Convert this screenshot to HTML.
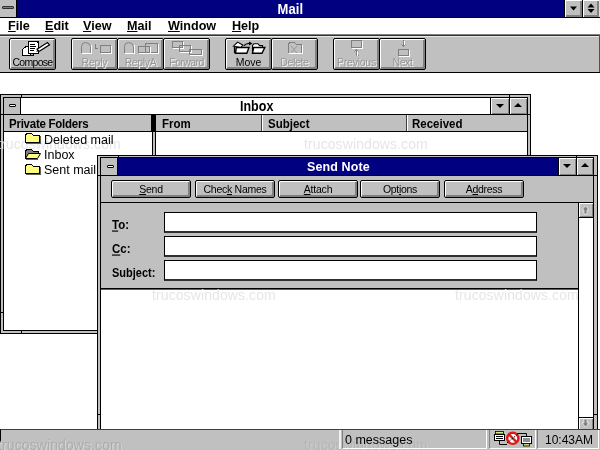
<!DOCTYPE html>
<html><head><meta charset="utf-8">
<style>
*{margin:0;padding:0;box-sizing:border-box}
html,body{width:600px;height:450px;overflow:hidden;background:#fff;font-family:"Liberation Sans",sans-serif}
.a{position:absolute}
.nav{background:#000080}
.g{background:#c0c0c0}
.k{background:#000}
.d{background:#808080}
.w{background:#fff}
.btn{position:absolute;background:#c0c0c0;border:1px solid #000;border-radius:2px;box-shadow:inset 1px 1px 0 #fff,inset -2px -2px 0 #808080}
.tb{font-size:10.5px;color:#000;text-align:center;white-space:nowrap}
.dis{color:#969696;text-shadow:1px 1px 0 #f4f4f4}
.bold{font-weight:bold}
.t{position:absolute;white-space:nowrap;line-height:1}
u{text-decoration:underline;text-underline-offset:1px;text-decoration-thickness:1px}
.wm{position:absolute;color:#e6e6e6;font-size:14px;white-space:nowrap;line-height:1;letter-spacing:0.1px}
.cb{position:absolute;background:#c0c0c0;box-shadow:inset 1px 1px #fff,inset -1px -1px #808080}
</style></head><body><div id="root" style="position:absolute;left:0;top:0;width:600px;height:450px;overflow:hidden;will-change:transform;background:#fff">

<div class="a nav" style="left:0;top:0;width:600px;height:17px"></div>
<div class="a g" style="left:0;top:0;width:17px;height:17px;border-right:1px solid #000"></div>
<div class="a" style="left:2px;top:6px;width:12px;height:3px;background:#808080;border:1px solid #303030;border-radius:1px"></div>
<div class="t bold" style="left:277.5px;top:2px;font-size:13px;color:#fff;letter-spacing:0.1px;transform:scaleY(1.08);transform-origin:0 0">Mail</div>
<div class="a k" style="left:564px;top:0;width:1px;height:17px"></div>
<div class="cb" style="left:565px;top:0;width:17px;height:17px;box-shadow:inset 1px 1px #fff,inset -2px -2px #808080"></div>
<div class="a k" style="left:582px;top:0;width:1px;height:17px"></div>
<div class="cb" style="left:583px;top:0;width:16px;height:17px;box-shadow:inset 1px 1px #fff,inset -2px -2px #808080"></div>
<div class="a" style="left:599px;top:0;width:1px;height:17px;background:#e0e0e0"></div>
<svg class="a" style="left:565px;top:0" width="35" height="17"><polygon points="5,6.5 12,6.5 8.5,10.5" fill="#000"/><polygon points="22.5,7.5 29.5,7.5 26,3.5" fill="#000"/><polygon points="22.5,9 29.5,9 26,13" fill="#000"/></svg>
<div class="a k" style="left:0;top:17px;width:600px;height:1px"></div>

<div class="t bold" style="left:8px;top:19.6px;font-size:12.6px"><u>F</u>ile</div>
<div class="t bold" style="left:45px;top:19.6px;font-size:12.6px"><u>E</u>dit</div>
<div class="t bold" style="left:83px;top:19.6px;font-size:12.6px"><u>V</u>iew</div>
<div class="t bold" style="left:127px;top:19.6px;font-size:12.6px"><u>M</u>ail</div>
<div class="t bold" style="left:168px;top:19.6px;font-size:12.6px"><u>W</u>indow</div>
<div class="t bold" style="left:232px;top:19.6px;font-size:12.6px"><u>H</u>elp</div>
<div class="a" style="left:0;top:34px;width:600px;height:1px;background:#808080"></div>
<div class="a" style="left:0;top:35px;width:600px;height:1px;background:#303030"></div>
<div class="a g" style="left:0;top:36px;width:600px;height:36px;border-top:1px solid #e8e8e8"></div>
<div class="a k" style="left:0;top:72px;width:600px;height:1px"></div>
<div class="a" style="left:599px;top:35px;width:1px;height:37px;background:#505050"></div>
<div class="btn" style="left:9px;top:38px;width:47px;height:32px"></div>
<div class="btn" style="left:71px;top:38px;width:47px;height:32px"></div>
<div class="btn" style="left:117px;top:38px;width:47px;height:32px"></div>
<div class="btn" style="left:163px;top:38px;width:47px;height:32px"></div>
<div class="btn" style="left:225px;top:38px;width:47px;height:32px"></div>
<div class="btn" style="left:271px;top:38px;width:47px;height:32px"></div>
<div class="btn" style="left:333px;top:38px;width:47px;height:32px"></div>
<div class="btn" style="left:379px;top:38px;width:47px;height:32px"></div>
<div class="t tb" style="left:9px;top:56.4px;width:47px;letter-spacing:-0.7px;transform:scaleY(1.1);transform-origin:0 0">Compose</div>
<div class="t tb dis" style="left:71px;top:56.4px;width:47px;letter-spacing:-0.2px;transform:scaleY(1.1);transform-origin:0 0">Reply</div>
<div class="t tb dis" style="left:117px;top:56.4px;width:47px;letter-spacing:-0.35px;transform:scaleY(1.1);transform-origin:0 0">ReplyA</div>
<div class="t tb dis" style="left:163px;top:56.4px;width:47px;letter-spacing:-0.6px;transform:scaleY(1.1);transform-origin:0 0">Forward</div>
<div class="t tb" style="left:225px;top:56.4px;width:47px;letter-spacing:-0.1px;transform:scaleY(1.1);transform-origin:0 0">Move</div>
<div class="t tb dis" style="left:271px;top:56.4px;width:47px;letter-spacing:-0.35px;transform:scaleY(1.1);transform-origin:0 0">Delete</div>
<div class="t tb dis" style="left:333px;top:56.4px;width:47px;letter-spacing:-0.25px;transform:scaleY(1.1);transform-origin:0 0">Previous</div>
<div class="t tb dis" style="left:379px;top:56.4px;width:47px;letter-spacing:-0.45px;transform:scaleY(1.1);transform-origin:0 0">Next</div>

<svg class="a" style="left:20px;top:40px" width="32" height="17" shape-rendering="crispEdges">
 <path d="M2.5,15.5 V9.5 L4.5,7.5 L6.5,6.5 H10.5 V15.5 Z" fill="#fff" stroke="#000"/>
 <path d="M2.5,15.5 H13.5 V13.5" fill="none" stroke="#000"/>
 <rect x="8.5" y="1.5" width="10" height="12" fill="#fff" stroke="#000"/>
 <path d="M10,4.5 H15 M10,6.5 H16 M10,8.5 H15 M10,10.5 H14" stroke="#000"/>
 <path d="M17,9.2 L27.5,2.5 L29.5,4.8 L19,11.5 Z" fill="#fff" stroke="#000" stroke-width="1.2" shape-rendering="auto"/>
 <path d="M17.5,9.8 L16.2,12 L18.8,11 Z" fill="#000" shape-rendering="auto"/>
 <path d="M16.5,1.5 L18.5,3.5" stroke="#000" shape-rendering="auto"/>
</svg>
<svg class="a" style="left:80px;top:41px" width="34" height="14" shape-rendering="crispEdges">
 <path d="M1.5,12 V5.5 Q1.5,1.5 5.5,1.5 Q9.5,1.5 10.5,5.5 V12" fill="none" stroke="#808080" shape-rendering="auto"/>
 <path d="M11.5,4 V12.5 H1.5" fill="none" stroke="#fff"/>
 <path d="M15.5,3 V7.5 H18" fill="none" stroke="#808080"/>
 <rect x="20.5" y="4.5" width="10" height="7" fill="none" stroke="#808080"/>
 <path d="M31.5,5 V12.5 H21" fill="none" stroke="#fff"/>
</svg>
<svg class="a" style="left:123px;top:41px" width="38" height="14" shape-rendering="crispEdges">
 <path d="M1.5,12 V5.5 Q1.5,1.5 5.5,1.5 Q9.5,1.5 10.5,5.5 V12" fill="none" stroke="#808080" shape-rendering="auto"/>
 <path d="M11.5,4 V12.5 H1.5" fill="none" stroke="#fff"/>
 <rect x="15.5" y="5.5" width="11" height="6" fill="none" stroke="#808080"/>
 <rect x="22.5" y="2.5" width="12" height="9" fill="none" stroke="#808080"/>
 <path d="M35.5,3 V12.5 H23" fill="none" stroke="#fff"/>
 <path d="M27.5,6 V12.5 H16" fill="none" stroke="#fff"/>
</svg>
<svg class="a" style="left:170px;top:40px" width="36" height="16" shape-rendering="crispEdges">
 <rect x="2.5" y="1.5" width="10" height="6" fill="none" stroke="#808080"/>
 <path d="M13.5,2 V8.5 H3" fill="none" stroke="#fff"/>
 <rect x="9.5" y="5.5" width="11" height="6" fill="none" stroke="#808080"/>
 <path d="M21.5,6 V12.5 H10" fill="none" stroke="#fff"/>
 <rect x="19.5" y="9.5" width="12" height="5" fill="none" stroke="#808080"/>
 <path d="M32.5,10 V15.5 H20" fill="none" stroke="#fff"/>
</svg>
<svg class="a" style="left:232px;top:41px" width="36" height="14" shape-rendering="auto">
 <path d="M2.5,6 V12.2" fill="none" stroke="#000" stroke-width="1.2"/>
 <polygon points="1.5,5.2 5.6,1.1 10.7,4 9,6.5" fill="#fff" stroke="#000" stroke-width="1.1"/>
 <polygon points="4.3,6.5 17,6.5 14.8,12.3 3.5,12.3" fill="#fff" stroke="#000" stroke-width="1.4"/>
 <path d="M11.6,4.8 Q14.5,2.2 17.6,2.4" fill="none" stroke="#000" stroke-width="1.1"/>
 <polygon points="17,0.4 20.6,2.4 17,4.4" fill="#000"/>
 <path d="M20.5,12 V4.5 L22,2.7 H25.8 L27.7,4.6 H30.5 V6.5" fill="#fff" stroke="#000" stroke-width="1.1"/>
 <polygon points="21.6,6.5 32.8,6.5 30,12.3 20.5,12.3" fill="#fff" stroke="#000" stroke-width="1.4"/>
</svg>
<svg class="a" style="left:286px;top:41px" width="20" height="14" shape-rendering="crispEdges">
 <path d="M2.5,11.5 V2.5 L4.5,1.5 H8.5 L10.5,3.5 H15.5 V11.5" fill="none" stroke="#808080"/>
 <path d="M16.5,4 V12.5 H3" fill="none" stroke="#fff"/>
 <path d="M5,5 L11,12 M11,5 L5,12" stroke="#9a9a9a" shape-rendering="auto"/>
</svg>
<svg class="a" style="left:350px;top:40px" width="16" height="17" shape-rendering="crispEdges">
 <rect x="1.5" y="0.5" width="10" height="7" fill="none" stroke="#808080"/>
 <path d="M12.5,1 V8.5 H2" fill="none" stroke="#fff"/>
 <path d="M6.5,9.5 V15.5 H9 M4.5,11.5 L6.5,9.5 L8.5,11.5" fill="none" stroke="#808080" shape-rendering="auto"/>
 <path d="M7.5,11 V15.5" stroke="#fff"/>
</svg>
<svg class="a" style="left:397px;top:40px" width="16" height="17" shape-rendering="crispEdges">
 <path d="M6.5,0 V6.5 M4.5,4.5 L6.5,6.5 L8.5,4.5" fill="none" stroke="#808080" shape-rendering="auto"/>
 <path d="M7.5,1 V5" stroke="#fff"/>
 <rect x="1.5" y="9.5" width="10" height="6" fill="none" stroke="#808080"/>
 <path d="M12.5,10 V16.5 H2" fill="none" stroke="#fff"/>
</svg>

<div class="a g" style="left:0;top:94px;width:531px;height:240px;border:1px solid #000"></div>
<div class="a w" style="left:3px;top:97px;width:525px;height:234px;border:1px solid #000"></div>

<div class="a k" style="left:21px;top:94px;width:1px;height:3px"></div>
<div class="a k" style="left:509px;top:94px;width:1px;height:3px"></div>
<div class="a k" style="left:21px;top:330px;width:1px;height:3px"></div>
<div class="a k" style="left:0;top:114px;width:3px;height:1px"></div>
<div class="a k" style="left:0;top:312px;width:3px;height:1px"></div>
<div class="a k" style="left:527px;top:114px;width:3px;height:1px"></div>
<div class="a k" style="left:527px;top:312px;width:3px;height:1px"></div>
<div class="a g" style="left:4px;top:98px;width:17px;height:16px;border-right:1px solid #000"></div>
<div class="a" style="left:9px;top:104px;width:7px;height:3px;background:#fff;border:1px solid #000;border-radius:1px"></div>
<div class="t bold" style="left:240px;top:100px;font-size:12.5px;transform:scaleY(1.1);transform-origin:0 0">Inbox</div>
<div class="a k" style="left:490px;top:98px;width:1px;height:16px"></div>
<div class="cb" style="left:491px;top:98px;width:18px;height:16px"></div>
<div class="a k" style="left:509px;top:98px;width:1px;height:16px"></div>
<div class="cb" style="left:510px;top:98px;width:17px;height:16px"></div>
<svg class="a" style="left:494px;top:101px" width="12" height="10"><polygon points="2,3 10,3 6,7" fill="#000"/></svg>
<svg class="a" style="left:512px;top:100px" width="12" height="10"><polygon points="2,7 10,7 6,3" fill="#000"/></svg>
<div class="a k" style="left:4px;top:114px;width:523px;height:1px"></div>
<div class="a g" style="left:4px;top:115px;width:523px;height:16px"></div>
<div class="a k" style="left:4px;top:131px;width:523px;height:1px"></div>
<div class="t bold" style="left:9px;top:118px;font-size:11.5px;letter-spacing:-0.25px;transform:scaleY(1.12);transform-origin:0 0">Private Folders</div>
<div class="a k" style="left:151px;top:115px;width:5px;height:16px"></div>
<div class="a" style="left:152px;top:132px;width:4px;height:199px;border-left:1px solid #000;border-right:1px solid #000;background:#c0c0c0"></div>
<div class="t bold" style="left:162px;top:118px;font-size:11.5px;transform:scaleY(1.12);transform-origin:0 0">From</div>
<div class="a" style="left:261px;top:115px;width:1px;height:16px;background:#404040"></div>
<div class="a w" style="left:262px;top:115px;width:1px;height:16px"></div>
<div class="t bold" style="left:268px;top:118px;font-size:11.5px;transform:scaleY(1.12);transform-origin:0 0">Subject</div>
<div class="a" style="left:406px;top:115px;width:1px;height:16px;background:#404040"></div>
<div class="a w" style="left:407px;top:115px;width:1px;height:16px"></div>
<div class="t bold" style="left:412px;top:118px;font-size:11.5px;transform:scaleY(1.12);transform-origin:0 0">Received</div>
<div class="wm" style="left:-3px;top:137px">trucoswindows.com</div>
<div class="wm" style="left:304px;top:137px">trucoswindows.com</div>
<div class="t" style="left:44px;top:134px;font-size:12.5px">Deleted mail</div>
<div class="t" style="left:44px;top:149px;font-size:12.5px">Inbox</div>
<div class="t" style="left:44px;top:164px;font-size:12.5px">Sent mail</div>
<svg class="a" style="left:24px;top:132px" width="18" height="45" shape-rendering="crispEdges">
 <path d="M1.5,10.5 V3.5 L2.5,1.5 H7.5 L8.5,2.5 L9.5,3.5 H15.5 V10.5 Z" fill="#ffff80" stroke="#000"/>
 <path d="M2,11.5 H16.5 V4" fill="none" stroke="#606060"/>
 <path d="M1.5,26.5 V19.5 L2.5,17.5 H7.5 L9.5,19.5 H14.5 V21.5" fill="#808080" stroke="#000"/>
 <polygon points="4.5,21.5 16.5,21.5 13.5,26.5 1.5,26.5" fill="#ffff80" stroke="#000" shape-rendering="auto"/>
 <path d="M2,27.5 H14" fill="none" stroke="#606060"/>
 <path d="M1.5,41.5 V34.5 L2.5,32.5 H7.5 L8.5,33.5 L9.5,34.5 H15.5 V41.5 Z" fill="#ffff80" stroke="#000"/>
 <path d="M2,42.5 H16.5 V35" fill="none" stroke="#606060"/>
</svg>

<div class="a g" style="left:97px;top:155px;width:501px;height:295px;border:1px solid #000"></div>
<div class="a" style="left:100px;top:157px;width:494px;height:293px;border:1px solid #000;border-bottom:none;background:#c0c0c0"></div>

<div class="a k" style="left:118px;top:155px;width:1px;height:3px"></div>
<div class="a k" style="left:576px;top:155px;width:1px;height:3px"></div>
<div class="a k" style="left:97px;top:175px;width:3px;height:1px"></div>
<div class="a k" style="left:97px;top:414px;width:3px;height:1px"></div>
<div class="a k" style="left:594px;top:175px;width:3px;height:1px"></div>
<div class="a k" style="left:594px;top:414px;width:3px;height:1px"></div>
<div class="a nav" style="left:101px;top:158px;width:492px;height:17px"></div>
<div class="a g" style="left:101px;top:158px;width:17px;height:17px;border-right:1px solid #000"></div>
<div class="a" style="left:107px;top:165px;width:7px;height:3px;background:#fff;border:1px solid #000;border-radius:1px"></div>
<div class="t bold" style="left:307px;top:161px;font-size:12.5px;color:#fff;letter-spacing:0.1px">Send Note</div>
<div class="a k" style="left:558px;top:158px;width:1px;height:17px"></div>
<div class="cb" style="left:559px;top:158px;width:17px;height:17px"></div>
<div class="a k" style="left:576px;top:158px;width:1px;height:17px"></div>
<div class="cb" style="left:577px;top:158px;width:16px;height:17px"></div>
<svg class="a" style="left:561px;top:161px" width="12" height="10"><polygon points="2,3 10,3 6,7" fill="#000"/></svg>
<svg class="a" style="left:579px;top:160px" width="12" height="10"><polygon points="2,7 10,7 6,3" fill="#000"/></svg>
<div class="a k" style="left:101px;top:175px;width:492px;height:1px"></div>

<div class="btn" style="left:111px;top:180px;width:80px;height:18px"></div>
<div class="btn" style="left:195px;top:180px;width:80px;height:18px"></div>
<div class="btn" style="left:278px;top:180px;width:80px;height:18px"></div>
<div class="btn" style="left:360px;top:180px;width:80px;height:18px"></div>
<div class="btn" style="left:444px;top:180px;width:80px;height:18px"></div>
<div class="t" style="left:111px;top:184px;width:80px;text-align:center;font-size:10.5px;letter-spacing:-0.25px"><u>S</u>end</div>
<div class="t" style="left:195px;top:184px;width:80px;text-align:center;font-size:10.5px;letter-spacing:-0.27px">Chec<u>k</u> Names</div>
<div class="t" style="left:278px;top:184px;width:80px;text-align:center;font-size:10.5px;letter-spacing:-0.2px"><u>A</u>ttach</div>
<div class="t" style="left:360px;top:184px;width:80px;text-align:center;font-size:10.5px;letter-spacing:-0.3px">Opt<u>i</u>ons</div>
<div class="t" style="left:444px;top:184px;width:80px;text-align:center;font-size:10.5px;letter-spacing:-0.3px">A<u>d</u>dress</div>
<div class="a k" style="left:101px;top:202px;width:493px;height:1px"></div>
<div class="t bold" style="left:112px;top:219px;font-size:11.5px;transform:scaleY(1.15);transform-origin:0 0"><u>T</u>o:</div>
<div class="t bold" style="left:112px;top:243px;font-size:11.5px;transform:scaleY(1.15);transform-origin:0 0"><u>C</u>c:</div>
<div class="t bold" style="left:112px;top:267px;font-size:11px;transform:scaleY(1.1);transform-origin:0 0">Subject:</div>
<div class="a w" style="left:164px;top:212px;width:373px;height:21px;border:1px solid #000;border-bottom:2px solid #303030"></div>
<div class="a w" style="left:164px;top:236px;width:373px;height:21px;border:1px solid #000;border-bottom:2px solid #303030"></div>
<div class="a w" style="left:164px;top:260px;width:373px;height:21px;border:1px solid #000;border-bottom:2px solid #303030"></div>
<div class="a k" style="left:101px;top:288px;width:477px;height:1px"></div>
<div class="a" style="left:101px;top:289px;width:477px;height:1px;background:#606060"></div>
<div class="a w" style="left:101px;top:290px;width:477px;height:140px"></div>
<div class="wm" style="left:152px;top:288px">trucoswindows.com</div>
<div class="wm" style="left:455px;top:288px">trucoswindows.com</div>
<div class="a w" style="left:578px;top:203px;width:16px;height:227px;border-left:1px solid #000;border-right:1px solid #000"></div>
<div class="cb" style="left:579px;top:203px;width:14px;height:14px"></div>
<div class="a k" style="left:579px;top:217px;width:14px;height:1px"></div>
<svg class="a" style="left:580px;top:205px" width="11" height="11"><path d="M5.5,1 L9,5 H7 V9 H4 V5 H2 Z" fill="#808080" stroke="#fff" stroke-width="0.6"/></svg>
<div class="a k" style="left:579px;top:417px;width:14px;height:1px"></div>
<div class="cb" style="left:579px;top:418px;width:14px;height:12px"></div>
<svg class="a" style="left:580px;top:418px" width="11" height="11"><path d="M5.5,9 L9,5 H7 V1 H4 V5 H2 Z" fill="#808080" stroke="#fff" stroke-width="0.6"/></svg>

<div class="a g" style="left:0;top:429px;width:600px;height:21px;border-top:1px solid #404040;border-left:1px solid #000"></div>
<div class="wm" style="left:-2px;top:438px;color:#acacac;text-shadow:1px 1px 0 #d8d8d8">trucoswindows.com</div>
<div class="wm" style="left:304px;top:438px;color:#b6b6b6;text-shadow:1px 1px 0 #cccccc">trucoswindows.com</div>
<div class="a" style="left:342px;top:430px;width:145px;height:19px;border-left:1px solid #808080;border-bottom:1px solid #fff;border-right:1px solid #fff"></div>
<div class="a" style="left:339px;top:430px;width:2px;height:19px;background:#f0f0f0"></div>
<div class="a" style="left:489px;top:430px;width:47px;height:19px;border-left:1px solid #808080;border-bottom:1px solid #fff;border-right:1px solid #fff"></div>
<div class="a" style="left:537px;top:430px;width:62px;height:19px;border-left:1px solid #808080;border-bottom:1px solid #fff;border-right:1px solid #fff"></div>
<div class="t" style="left:345px;top:434px;font-size:12.5px">0 messages</div>
<div class="t" style="left:545px;top:434px;font-size:12px">10:43AM</div>
<svg class="a" style="left:492px;top:431px" width="42" height="18">
 <rect x="3.5" y="0.5" width="8" height="2.5" fill="#d8e880" stroke="#000" stroke-width="0.8"/>
 <rect x="2.5" y="3.5" width="10" height="6" fill="#fff" stroke="#000"/>
 <path d="M4,5.5 H11 M4,7.5 H11" stroke="#000" stroke-width="1"/>
 <path d="M7.5,9.5 V13.5 H15" fill="none" stroke="#000"/>
 <path d="M25,2.5 H34.5 V5.5" fill="none" stroke="#000"/>
 <rect x="29.5" y="5.5" width="10" height="7" fill="#fff" stroke="#000"/>
 <rect x="31" y="7" width="7" height="4" fill="#8890a0"/>
 <rect x="31.5" y="12.5" width="6" height="2.5" fill="#c8d860" stroke="#000" stroke-width="0.8"/>
 <circle cx="20.8" cy="7.3" r="5.6" fill="#fff" stroke="#e01818" stroke-width="2.4"/>
 <path d="M17,3.5 L24.6,11.1" stroke="#e01818" stroke-width="2.4"/>
 <path d="M15,12 L26,3" stroke="#000" stroke-width="1" stroke-dasharray="1.6,1.4"/>
</svg>

</div></body></html>
